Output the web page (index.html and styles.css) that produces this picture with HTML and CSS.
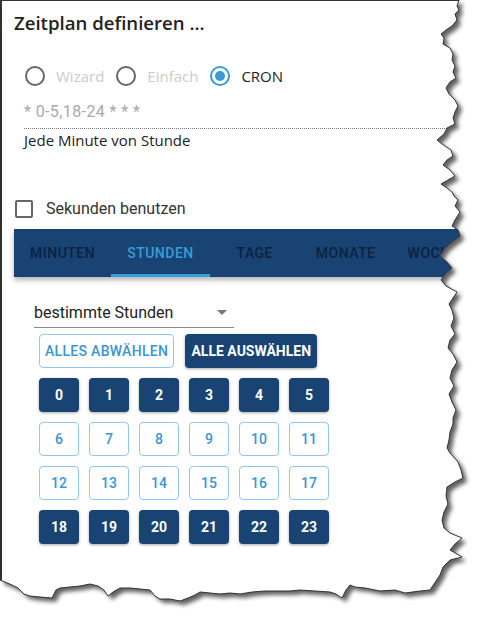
FILE: index.html
```html
<!DOCTYPE html>
<html lang="de">
<head>
    <meta charset="UTF-8">
    <title>Zeitplan definieren</title>
    <link rel="stylesheet" href="styles.css">
</head>
<body>
    <div class="paper">
        <h1 class="title">Zeitplan definieren ...</h1>

        <div class="modes">
            <label class="mode disabled"><span class="radio"></span>Wizard</label>
            <label class="mode disabled"><span class="radio"></span>Einfach</label>
            <label class="mode"><span class="radio checked"></span>CRON</label>
        </div>

        <div class="cron-value">* 0-5,18-24 * * *</div>
        <div class="cron-text">Jede Minute von Stunde</div>

        <label class="seconds"><span class="checkbox"></span>Sekunden benutzen</label>

        <div class="tabs">
            <div class="tab">Minuten</div>
            <div class="tab active">Stunden</div>
            <div class="tab">Tage</div>
            <div class="tab">Monate</div>
            <div class="tab">Wochentage</div>
        </div>

        <div class="panel">
            <div class="select">
                <span>bestimmte Stunden</span>
                <span class="arrow"></span>
            </div>
            <div class="actions">
                <button class="btn outline wide">Alles abwählen</button>
                <button class="btn wide">Alle auswählen</button>
            </div>
            <div class="hours" id="hours"></div>
        </div>
    </div>

    <svg class="tear" width="483" height="624" viewBox="0 0 483 624">
        <defs>
            <filter id="blur" x="-10%" y="-10%" width="120%" height="120%">
                <feGaussianBlur stdDeviation="2.2"></feGaussianBlur>
            </filter>
            <clipPath id="outside">
                <path id="outerPath"></path>
            </clipPath>
        </defs>
        <path id="outerFill" fill="#fff"></path>
        <g clip-path="url(#outside)">
            <path id="shadow" fill="#444" opacity="0.85" filter="url(#blur)" transform="translate(4,4)"></path>
        </g>
        <path id="edge" fill="none" stroke="#333" stroke-width="1"></path>
    </svg>

    <script>
        const selected = [0, 1, 2, 3, 4, 5, 18, 19, 20, 21, 22, 23];
        const hours = document.getElementById("hours");
        hours.innerHTML = Array.from({ length: 24 }, (_, h) =>
            `<button class="btn ${selected.includes(h) ? "" : "outline"}">${h}</button>`).join("");

        // torn paper edge: right side top to bottom, then bottom side right to left
        const edge = [
            [459,0],[457,6],[459,10],[455,14],[457,20],[452,26],[446,30],[441,34],[444,38],[443,44],
            [450,48],[453,54],[452,60],[455,66],[453,72],[456,78],[450,82],[446,88],[449,94],[455,100],
            [458,106],[455,112],[453,118],[455,124],[447,128],[444,134],[437,140],[442,144],[451,150],
            [453,156],[447,160],[443,165],[450,170],[455,176],[448,180],[441,184],[447,188],[452,192],
            [454,196],[458,200],[455,206],[460,212],[455,220],[452,226],[458,230],[460,236],[452,242],
            [445,248],[440,256],[447,262],[452,268],[445,274],[441,280],[446,286],[457,292],[453,298],
            [449,304],[452,310],[454,318],[451,326],[455,334],[450,340],[448,348],[453,354],[457,362],
            [452,370],[450,378],[454,386],[449,394],[452,402],[456,410],[453,418],[453,424],[450,432],
            [449,440],[447,448],[450,453],[458,462],[461,470],[463,478],[455,482],[447,487],[446,496],
            [448,504],[444,512],[442,520],[444,528],[450,533],[462,538],[455,544],[450,550],[462,557],
            [450,560],[443,567],[440,575],[434,584],[430,590],
            [420,591],[405,593],[395,590],[380,591],[365,588],[355,587],[350,585],[346,590],[342,598],
            [336,594],[330,592],[315,591],[300,590],[290,591],[280,591],[265,591],[252,592],[240,594],
            [230,593],[220,594],[210,593],[200,592],[195,595],[188,598],[180,601],[170,599],[160,599],
            [155,596],[150,590],[140,589],[130,588],[120,588],[113,592],[108,596],[104,590],[98,586],
            [90,584],[80,586],[70,587],[60,588],[56,590],[52,598],[40,597],[30,596],[24,594],[18,588],
            [12,585],[5,582],[0,580]
        ];
        const line = edge.map(p => p.join(",")).join(" L");
        document.getElementById("edge").setAttribute("d", "M" + line);
        document.getElementById("shadow").setAttribute("d", "M0,0 L" + line + " Z");
        const outer = "M" + line + " L0,624 L483,624 L483,0 Z";
        document.getElementById("outerPath").setAttribute("d", outer);
        document.getElementById("outerFill").setAttribute("d", outer);
    </script>
</body>
</html>
```

FILE: styles.css
```css
body {
    margin: 0;
    background: #fff;
    font-family: Roboto, "Liberation Sans", sans-serif;
    color: #222;
    overflow: hidden;
}
.paper {
    height: 623px;
    border-top: 1px solid #333;
    border-left: 2px solid #333;
    padding-left: 12px;
    overflow: hidden;
}
.title {
    margin: 0;
    padding-top: 9px;
    font-family: "Open Sans", sans-serif;
    font-size: 18.6px;
    font-weight: 600;
    line-height: 26px;
    color: #222;
}
.modes {
    display: flex;
    gap: 12px;
    margin-top: 29px;
    padding-left: 11px;
    height: 22px;
    align-items: center;
}
.mode {
    display: flex;
    align-items: center;
    gap: 11px;
    font-family: "Open Sans", sans-serif;
    font-size: 15px;
    color: #222;
}
.mode.disabled {
    color: #ccc;
}
.radio {
    width: 16px;
    height: 16px;
    border: 2px solid #666;
    border-radius: 50%;
    display: flex;
    align-items: center;
    justify-content: center;
}
.radio.checked {
    border-color: #3a9bd5;
}
.radio.checked::after {
    content: "";
    width: 10px;
    height: 10px;
    border-radius: 50%;
    background: #3a9bd5;
}
.cron-value {
    margin-top: 13px;
    margin-left: 10px;
    font-size: 16px;
    line-height: 24px;
    color: #a9a9a9;
    letter-spacing: 0.4px;
    padding-bottom: 4px;
    border-bottom: 1px dotted #777;
}
.cron-text {
    margin-left: 10px;
    font-family: "Open Sans", sans-serif;
    font-size: 15px;
    line-height: 22px;
    color: #222;
}
.seconds {
    display: flex;
    align-items: center;
    gap: 13px;
    margin-top: 48px;
    margin-left: 1px;
    font-size: 16px;
    color: #333;
}
.checkbox {
    width: 14px;
    height: 14px;
    border: 2px solid #666;
    border-radius: 2px;
}
.tabs {
    display: flex;
    margin-top: 11px;
    width: 480px;
    height: 48px;
    background: #184373;
    box-shadow: 0 3px 5px rgba(0, 0, 0, 0.3);
}
.tab {
    min-width: 90px;
    padding: 0 16px;
    box-sizing: border-box;
    display: flex;
    align-items: center;
    justify-content: center;
    flex-shrink: 0;
    font-size: 14px;
    font-weight: 500;
    letter-spacing: 0.5px;
    text-transform: uppercase;
    color: #0b2240;
    border-bottom: 3px solid transparent;
    padding-top: 3px;
}
.tab.active {
    color: #3a9bd9;
    border-bottom-color: #3a9bd9;
}
.panel {
    padding-left: 20px;
    padding-top: 22px;
}
.select {
    width: 200px;
    display: flex;
    justify-content: space-between;
    align-items: center;
    font-size: 16px;
    color: #222;
    height: 29px;
    border-bottom: 1px solid #8a8a8a;
    box-sizing: border-box;
    padding-bottom: 2px;
}
.arrow {
    width: 0;
    height: 0;
    border-left: 5px solid transparent;
    border-right: 5px solid transparent;
    border-top: 5px solid #777;
    margin-right: 7px;
}
.actions {
    display: flex;
    gap: 11px;
    margin-top: 6px;
    padding-left: 5px;
}
.btn {
    height: 34px;
    width: 40px;
    padding: 0;
    border: none;
    border-radius: 4px;
    background: #184373;
    color: #fff;
    font-family: Roboto, sans-serif;
    font-size: 14px;
    font-weight: 700;
    box-shadow: 0 1px 3px rgba(0, 0, 0, 0.35);
}
.btn.wide {
    width: auto;
    padding: 0 5px;
    letter-spacing: 0.3px;
    text-transform: uppercase;
}
.btn.wide:last-child {
    width: 132px;
    padding: 0;
    letter-spacing: 0;
}
.btn.outline {
    background: #fff;
    border: 1px solid #92c9ea;
    color: #3b95d1;
    font-weight: 500;
    box-shadow: none;
}
.hours {
    display: grid;
    grid-template-columns: repeat(6, 40px);
    gap: 10px;
    margin-top: 10px;
    padding-left: 5px;
}
.tear {
    position: absolute;
    top: 0;
    left: 0;
    pointer-events: none;
}
```
